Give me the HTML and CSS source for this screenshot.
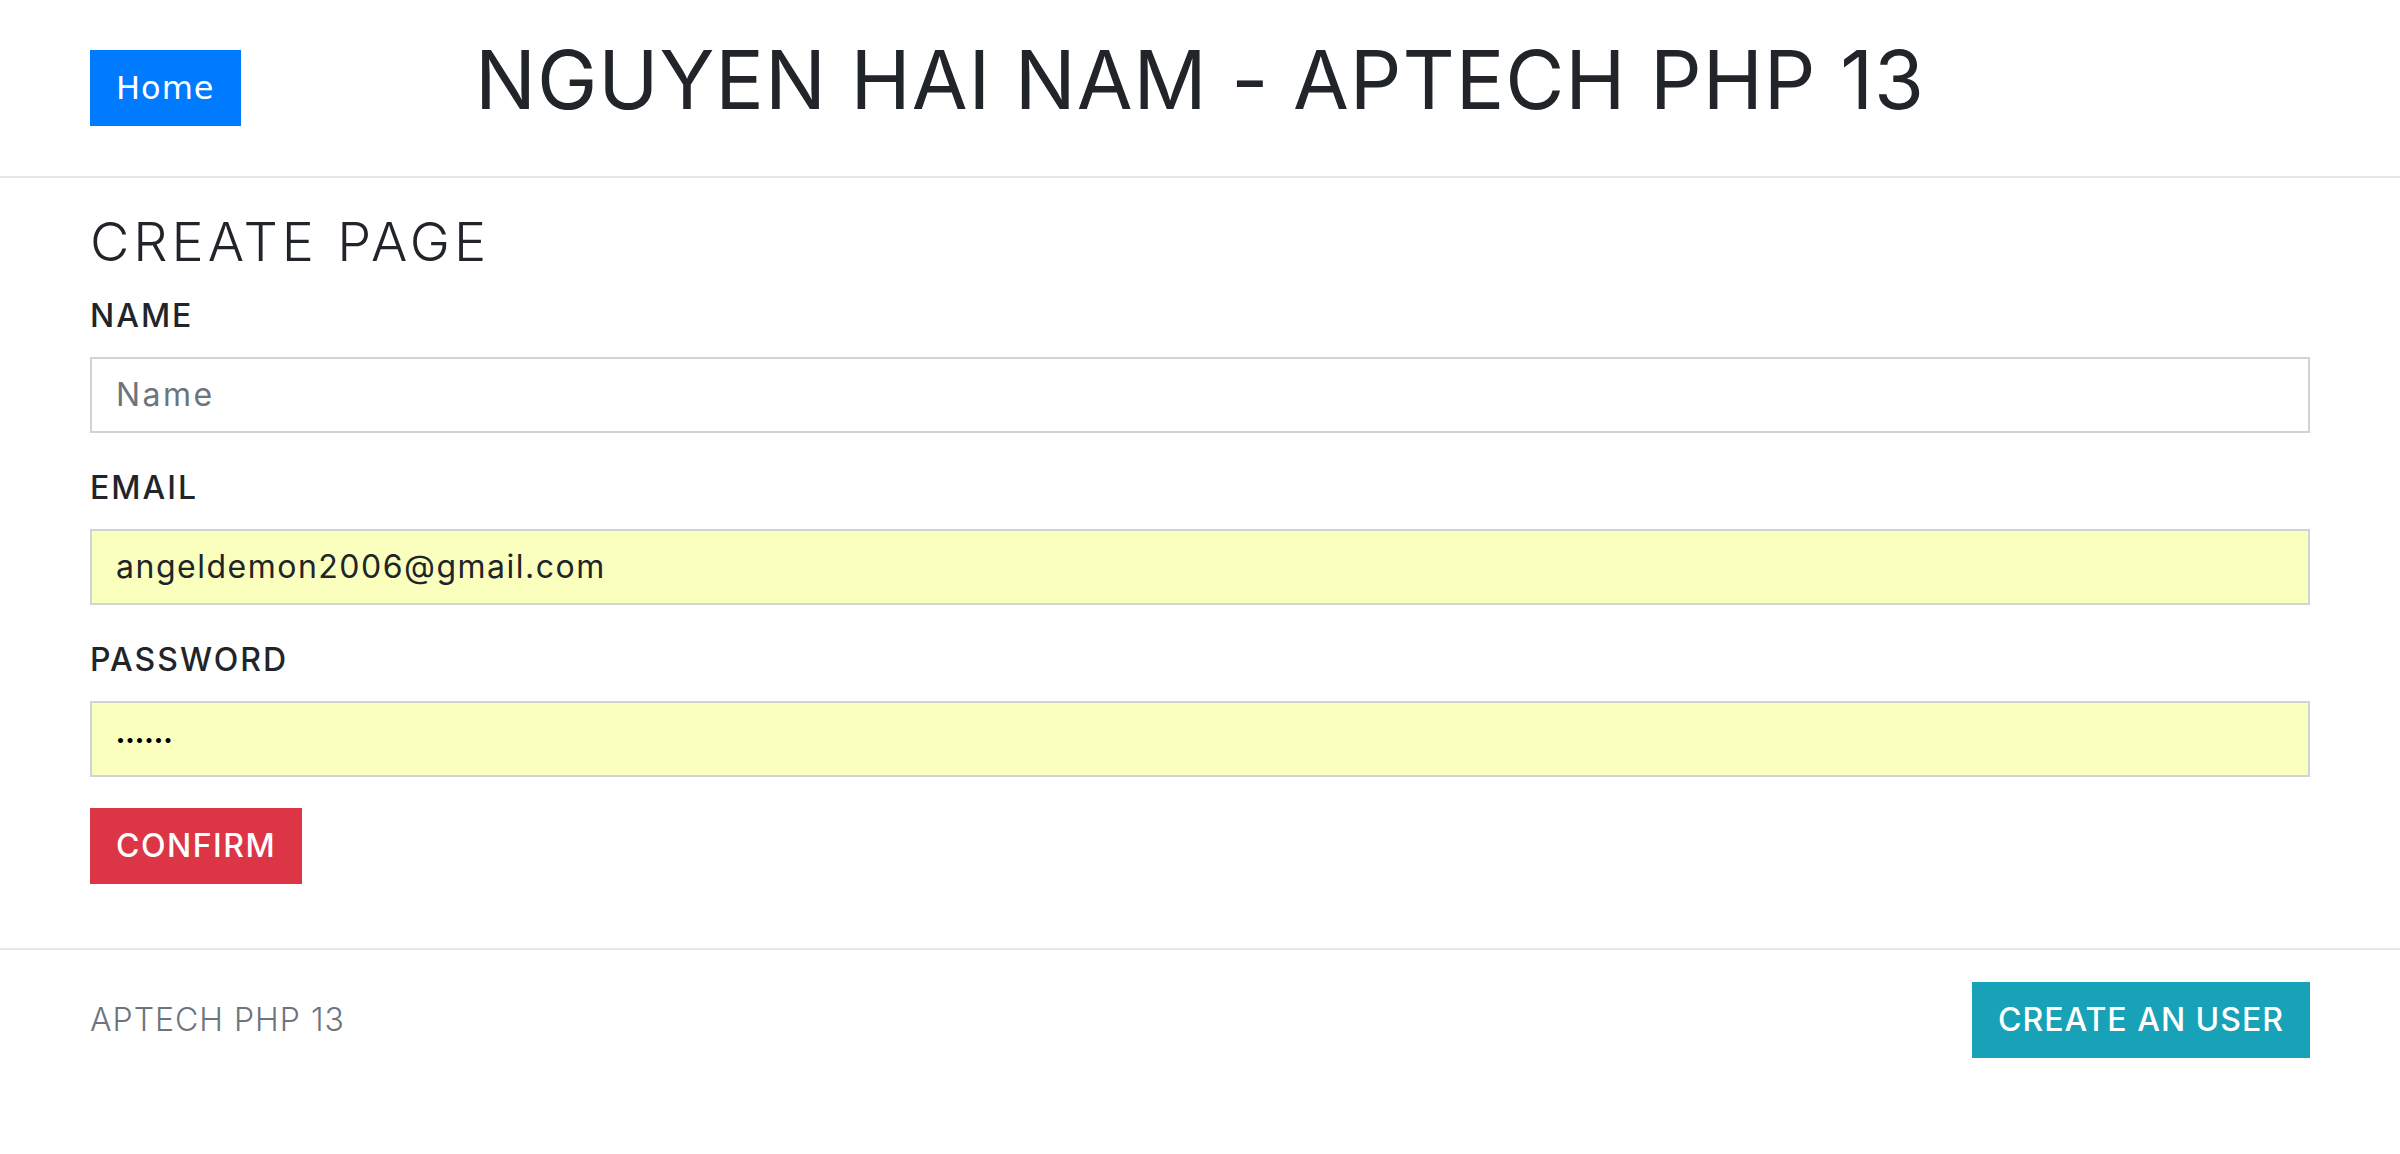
FILE: index.html
```html
<!DOCTYPE html>
<html lang="en">
<head>
<meta charset="utf-8">
<title>Create Page</title>
<link rel="stylesheet" href="styles.css">
</head>
<body>
<header class="site-header">
  <div class="header-left"><a class="btn btn-primary btn-home" href="#">Home</a></div>
  <h1 class="site-title">NGUYEN HAI NAM - APTECH PHP 13</h1>
  <div class="header-right"></div>
</header>
<main class="page">
  <h3 class="page-title">CREATE PAGE</h3>
  <form class="form">
    <div class="form-group">
      <label class="form-label" for="name">NAME</label>
      <input class="form-control" id="name" type="text" placeholder="Name">
    </div>
    <div class="form-group">
      <label class="form-label" for="email">EMAIL</label>
      <input class="form-control autofilled" id="email" type="email" value="angeldemon2006@gmail.com">
    </div>
    <div class="form-group">
      <label class="form-label" for="password">PASSWORD</label>
      <input class="form-control autofilled password" id="password" type="password" value="123456">
    </div>
    <button class="btn btn-danger" type="button">CONFIRM</button>
  </form>
</main>
<footer class="site-footer">
  <span class="footer-text">APTECH PHP 13</span>
  <a class="btn btn-info" href="#">CREATE AN USER</a>
</footer>
</body>
</html>
```
FILE: styles.css
```css
* { box-sizing: border-box; }
html, body { margin: 0; padding: 0; background: #fff; }
body {
  font-family: Inter, "Open Sans", "DejaVu Sans", sans-serif;
  color: #212529;
  font-size: 32px;
  line-height: 48px;
}
.site-header {
  height: 178px;
  padding: 32px 90px 0;
  border-bottom: 2px solid #e6e6e6;
  display: grid;
  grid-template-columns: 1fr auto 1fr;
  align-items: start;
}
.header-left { display: flex; }
.btn {
  display: inline-block;
  font-family: Inter, "Open Sans", sans-serif;
  font-size: 32px;
  font-weight: 500;
  line-height: 48px;
  letter-spacing: 1.5px;
  padding: 12px 24px;
  border: 2px solid transparent;
  border-radius: 0;
  color: #fff;
  text-decoration: none;
  cursor: pointer;
}
.btn-home {
  margin-top: 18px;
  font-family: "DejaVu Sans", sans-serif;
  font-weight: 400;
  letter-spacing: 1px;
}
.btn-info { letter-spacing: 1px; }
.btn-primary { background: #007bff; border-color: #007bff; }
.btn-danger { background: #dc3545; border-color: #dc3545; }
.btn-info { background: #17a2b8; border-color: #17a2b8; }
.site-title {
  margin: 0;
  font-size: 81px;
  font-weight: 400;
  line-height: 1.2;
  letter-spacing: 0.9px;
  color: #212529;
}
.page { padding: 32px 90px 64px; }
.page-title {
  margin: 0 0 17px;
  font-size: 54px;
  font-weight: 300;
  line-height: 1.2;
  letter-spacing: 4px;
}
.form-group { margin-bottom: 31px; }
.form-label {
  display: block;
  margin-bottom: 17px;
  font-weight: 500;
  letter-spacing: 2px;
}
.form-control {
  display: block;
  width: 100%;
  height: 76px;
  padding: 0 24px;
  font-family: inherit;
  font-size: 32px;
  letter-spacing: 1.5px;
  color: #212529;
  background: #fff;
  border: 2px solid #ced4da;
  border-radius: 0;
  outline: none;
}
.form-control::placeholder { color: #6c757d; opacity: 1; letter-spacing: 2.5px; }
.autofilled { background: #faffbd; }
.password { font-size: 16px; letter-spacing: 0.5px; color: #000; }
.site-footer {
  border-top: 2px solid #e6e6e6;
  padding: 32px 90px;
  display: flex;
  justify-content: space-between;
  align-items: center;
}
.footer-text { font-weight: 300; color: #6c757d; letter-spacing: 1px; }
```
